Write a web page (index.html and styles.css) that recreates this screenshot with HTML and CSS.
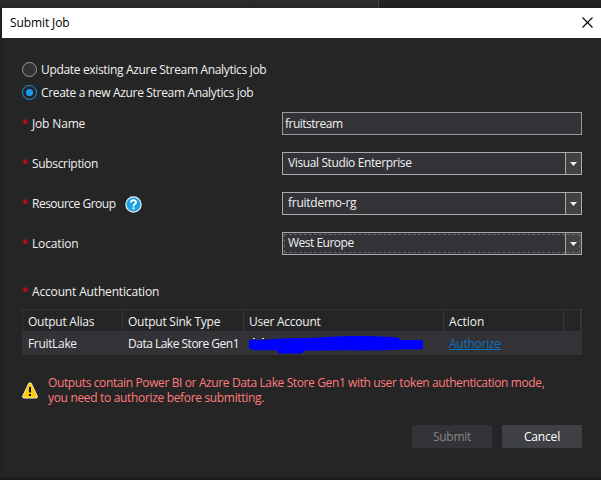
FILE: index.html
```
<!DOCTYPE html>
<html lang="en">
<head>
<meta charset="utf-8">
<title>Submit Job</title>
<link rel="stylesheet" href="styles.css">
</head>
<body>
<div class="backdrop"></div>
<main class="dialog">
  <header class="titlebar">
    <h1 class="title">Submit Job</h1>
    <svg class="close" width="11" height="11" viewBox="0 0 11 11"><path d="M.5.5l10 10M10.5.5l-10 10" stroke="#000" stroke-width="1.1"/></svg>
  </header>
  <div class="content">
    <div class="radio"><span class="dot"></span><span class="caption">Update existing Azure Stream Analytics job</span></div>
    <div class="radio"><span class="dot checked"></span><span class="caption">Create a new Azure Stream Analytics job</span></div>

    <div class="fields">
      <div class="field"><i class="req">*</i><span class="label loose">Job Name</span><div class="input tightest">fruitstream</div></div>
      <div class="field"><i class="req">*</i><span class="label">Subscription</span>
        <div class="select"><span class="value tighter">Visual Studio Enterprise</span><span class="arrow"></span></div></div>
      <div class="field"><i class="req">*</i><span class="label tightest">Resource Group
        <svg class="help" width="17" height="17" viewBox="0 0 17 17"><circle cx="8.5" cy="8.5" r="7.6" fill="#1ba1e2" stroke="#eef4f8" stroke-width="1.2"/><path d="M6 6.6C6 3.5 11 3.6 11 6.3C11 8.2 8.5 7.9 8.5 10.2" fill="none" stroke="#fff" stroke-width="1.9"/><path d="M7.5 11.3h2v2h-2z" fill="#fff"/></svg></span>
        <div class="select"><span class="value tight">fruitdemo-rg</span><span class="arrow"></span></div></div>
      <div class="field"><i class="req">*</i><span class="label loose">Location</span>
        <div class="select focused"><span class="value tightest">West Europe</span><span class="arrow"></span></div></div>
    </div>

    <div class="section"><i class="req">*</i><span class="loose">Account Authentication</span></div>
    <div class="table">
      <div class="row head"><span class="tight">Output Alias</span><span class="tight">Output Sink Type</span><span class="tight">User Account</span><span class="wide">Action</span><span></span></div>
      <div class="row data"><span>FruitLake</span><span class="tightest">Data Lake Store Gen1</span>
        <span><svg class="scribble" width="174" height="18" viewBox="0 0 174 18"><path d="M4 2.5h2M13 2.5h2" stroke="#ddd"/><path d="M0 6Q0 3.5 3 3.5L13 4Q32 1.6 63 2Q90-.5 120 0L147 1.2Q150 1.5 151 4H172Q174 4 174 7V12Q173 14 170 13.5H153Q126 15.2 101 14.2L55 14.8L54 16.5Q53 18 50 17.5H30Q28 17 28 14.2H10Q2 14.5 0 12Z" fill="#00f"/></svg></span>
        <span><a class="link tight">Authorize</a></span><span></span></div>
    </div>

    <div class="warning">
      <svg width="16" height="17" viewBox="0 0 16 17"><path d="M8 .8Q9 .8 9.4 1.6L15.3 14.2Q15.8 16 14 16H2Q.2 16 .7 14.2L6.6 1.6Q7 .8 8 .8Z" fill="#fc0" stroke="#f5f0d8" stroke-width="1"/><path d="M7 5h2v5.5H7zM7 12h2v2H7z" fill="#111"/></svg>
      <p><span class="tighter">Outputs contain Power BI or Azure Data Lake Store Gen1 with user token authentication mode,</span><br>you need to authorize before submitting.</p>
    </div>

    <div class="actions"><div class="button disabled tight">Submit</div><div class="button loose">Cancel</div></div>
  </div>
</main>
</body>
</html>
```
FILE: styles.css
```
* { box-sizing: border-box; }
body {
  margin: 0;
  height: 480px;
  overflow: hidden;
  background: linear-gradient(#252526, #1f1f20 8px, #222223 9px, #222223 476px, #1c1a1b 479px);
  color: #f1f1f1;
  font: 12px/16px "Open Sans", "Noto Sans", sans-serif;
  letter-spacing: -.33px;
  white-space: nowrap;
}
.wide { letter-spacing: .05px; }
.title { letter-spacing: -.1px; }
.loose { letter-spacing: -.16px; }
.tight { letter-spacing: -.25px; }
.tighter { letter-spacing: -.38px; }
.tightest { letter-spacing: -.5px; }

.backdrop {
  height: 8px;
  width: 379px;
  border-right: 1px solid #3f3f46;
  background: linear-gradient(#2d2d30, #262628);
}
.dialog { margin-left: 2px; height: 469px; background: #252526; }
.titlebar {
  display: flex;
  align-items: center;
  justify-content: space-between;
  height: 30px;
  padding: 0 8px 0 8px;
  background: #fff;
  color: #000;
}
h1 { margin: 0; font-size: 12px; font-weight: 400; }
.close { margin-bottom: 2px; }
.content { padding: 23px 19px 0 20px; }

.radio { display: flex; align-items: center; gap: 4px; height: 17px; margin-bottom: 6px; }
.caption { padding-top: 1px; }
.dot {
  width: 15px;
  height: 15px;
  border: 1px solid #999;
  border-radius: 50%;
  background: #333337;
}
.dot.checked {
  border-color: #1c97ea;
  background: radial-gradient(circle, #1c97ea 3.3px, #252526 4px);
}

.fields { display: grid; gap: 17px; }
.radio + .fields { padding-top: 5px; }
.field { display: grid; grid-template-columns: 10px 250px 300px; align-items: center; height: 23px; }
.req { color: #f00000; font-size: 10px; font-style: normal; font-weight: 600; line-height: 12px; }
.field .req { margin-top: -2px; }
.section .req { padding-top: 1px; }
.label { display: flex; align-items: center; gap: 9px; }
.help { margin-top: 1px; }
.input, .select { height: 23px; border: 1px solid #999; background: #333337; }
.input { padding: 3px 2px; }
.select { display: flex; position: relative; border-color: #aaa; }
.value { flex: 1; padding: 2px 5px; }
.arrow {
  display: flex;
  align-items: center;
  justify-content: center;
  width: 16px;
  border-left: 1px solid #aaa;
  background: #424245;
}
.arrow::after {
  content: "";
  width: 7px;
  height: 4px;
  margin-top: 1px;
  background: #f1f1f1;
  clip-path: polygon(0 0, 100% 0, 50% 100%);
}
.focused::after { content: ""; position: absolute; inset: 1px; border: 1px dashed #65656a; }

.section { display: grid; grid-template-columns: 10px 1fr; margin-top: 29px; height: 25px; }
.table { width: 560px; background: #252526; border: 1px solid #333337; border-bottom: 0; }
.row { display: grid; grid-template-columns: 100px 121px 200px 120px 17px; }
.row > span { padding-left: 5px; }
.head > span { height: 21px; padding-top: 4px; border-right: 1px solid #37373b; }
.data { height: 24px; padding-top: 2px; background: #333337; align-items: center; }
.scribble { display: block; margin-top: 2px; }
.link { color: #0e70c0; text-decoration: underline; }

.warning { display: flex; align-items: center; gap: 10px; height: 30px; margin-top: 20px; color: #ff7b7b; }
.warning p { margin: 0; line-height: 15px; }
.actions { display: flex; justify-content: flex-end; gap: 10px; margin-top: 20px; }
.button { width: 80px; height: 23px; line-height: 23px; text-align: center; background: #3f3f46; color: #fff; }
.disabled { background: #333337; color: #858585; }
```
